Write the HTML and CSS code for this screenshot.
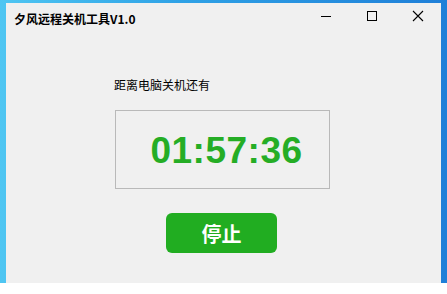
FILE: index.html
```html
<!DOCTYPE html>
<html>
<head>
<meta charset="utf-8">
<link rel="stylesheet" href="styles.css">
</head>
<body>
<div class="desktop">
  <div class="window">
    <div class="titlebar">
      <div class="title">夕风远程关机工具V1.0</div>
      <div class="controls">
        <div class="ctl"><svg width="12" height="12" viewBox="0 0 12 12"><path d="M1 6.5H11" stroke="#000" stroke-width="1"/></svg></div>
        <div class="ctl"><svg width="12" height="12" viewBox="0 0 12 12"><rect x="1.5" y="1.5" width="9" height="9" fill="none" stroke="#000" stroke-width="1"/></svg></div>
        <div class="ctl"><svg width="12" height="12" viewBox="0 0 12 12"><path d="M1 1L11 11M11 1L1 11" stroke="#000" stroke-width="1.1"/></svg></div>
      </div>
    </div>
    <div class="content">
      <div class="label">距离电脑关机还有</div>
      <div class="timebox"><span class="time">01:57:36</span></div>
      <button class="stop">停止</button>
    </div>
  </div>
</div>
</body>
</html>
```
FILE: styles.css
```css
html, body {
  margin: 0;
  padding: 0;
  background: #ffffff;
  width: 447px;
  height: 294px;
  overflow: hidden;
}
.desktop {
  height: 283px;
  background: linear-gradient(90deg, #4fc6f2 0%, #2fa2e6 40%, #1f7fd8 100%);
  padding: 3px 6px 0 6px;
  box-sizing: border-box;
  display: flex;
}
.window {
  flex: 1;
  background: #f0f0f0;
  display: flex;
  flex-direction: column;
  font-family: "Noto Sans CJK SC", "Liberation Sans", sans-serif;
}
.titlebar {
  height: 30px;
  display: flex;
  align-items: center;
  justify-content: space-between;
}
.title {
  padding-left: 8px;
  font-size: 12px;
  font-weight: bold;
  color: #000;
}
.controls {
  display: flex;
  height: 30px;
  align-self: flex-start;
}
.ctl {
  width: 46px;
  height: 25px;
  display: flex;
  align-items: center;
  justify-content: center;
}
.content {
  display: flex;
  flex-direction: column;
  align-items: flex-start;
  padding-top: 44px;
}
.label {
  margin-left: 108px;
  font-size: 12px;
  line-height: 16px;
  color: #000;
}
.timebox {
  margin-left: 109px;
  margin-top: 17px;
  width: 215px;
  height: 79px;
  box-sizing: border-box;
  border: 1px solid #b9b9b9;
  padding-left: 8px;
  display: flex;
  align-items: center;
  justify-content: center;
}
.time {
  font-family: "Liberation Sans", Arial, sans-serif;
  font-weight: bold;
  font-size: 37px;
  color: #25ad25;
  letter-spacing: 0.5px;
  margin-top: 2px;
}
.stop {
  margin-left: 160px;
  margin-top: 24px;
  width: 111px;
  height: 40px;
  border: none;
  border-radius: 6px;
  background: #21ad21;
  color: #ffffff;
  font-family: "Noto Sans CJK SC", sans-serif;
  font-weight: bold;
  font-size: 20px;
  padding: 0;
}
```
